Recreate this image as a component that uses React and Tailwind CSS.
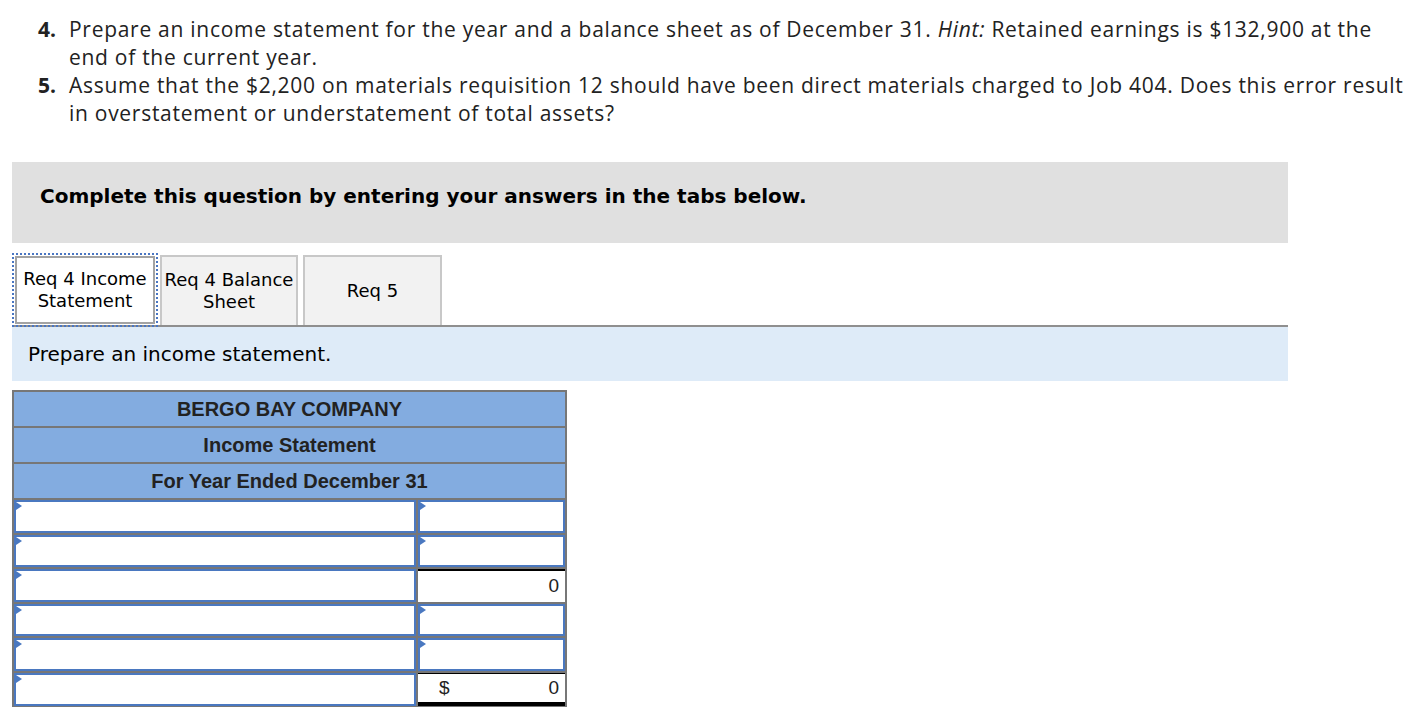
import React from 'react';

function Marker() {
    return (
        <span className="absolute left-0 top-0 w-0 h-0 border-t-[4px] border-b-[4px] border-l-[6px] border-t-transparent border-b-transparent border-l-[#4a78c0]" />
    );
}

function InputCell() {
    return (
        <div className="relative bg-white border-2 border-[#4a78c0]">
            <Marker />
        </div>
    );
}

function ValueCell({ value, dollar, total }) {
    return (
        <div
            className={
                'flex items-center justify-between bg-white px-[6px] text-[19px] text-[#222] ' +
                (total ? 'border-t border-black border-b-[4px]' : 'border-t-2 border-black')
            }
        >
            <span className="pl-[15px]">{dollar ? '$' : ''}</span>
            <span>{value}</span>
        </div>
    );
}

export default function App() {
    const rows = [
        { type: 'input' },
        { type: 'input' },
        { type: 'value', value: '0' },
        { type: 'input' },
        { type: 'input' },
        { type: 'value', value: '0', dollar: true, total: true },
    ];

    return (
        <div className="min-h-screen bg-white text-black">
            <ol className="pt-[15px] pl-[38px] pr-[8px] text-[21px] tracking-[0.72px] leading-[28px] text-[#222] font-['Open_Sans',sans-serif]">
                <li className="flex">
                    <span className="w-[31px] shrink-0 font-bold tracking-normal">4.</span>
                    <p>
                        Prepare an income statement for the year and a balance sheet as of December 31. <i>Hint:</i> Retained earnings is $132,900 at the end of the current year.
                    </p>
                </li>
                <li className="flex">
                    <span className="w-[31px] shrink-0 font-bold tracking-normal">5.</span>
                    <p>
                        Assume that the $2,200 on materials requisition 12 should have been direct materials charged to Job 404. Does this error result in overstatement or understatement of total assets?
                    </p>
                </li>
            </ol>

            <div className="mx-[12px] w-[1276px] font-['DejaVu_Sans',Verdana,sans-serif]">
                <div className="mt-[35px] h-[81px] bg-[#e0e0e0] flex items-center pl-[28px] pb-[13px]">
                    <span className="text-[20px] font-bold text-black">
                        Complete this question by entering your answers in the tabs below.
                    </span>
                </div>

                <div className="mt-[10px] flex items-end border-b-2 border-[#8f8f8f]">
                    <div className="relative z-10 -mb-[2px] border-2 border-dotted border-[#4a76c2] p-px">
                        <div className="w-[140px] h-[68px] border-2 border-[#a3a3a3] bg-white flex items-center justify-center text-center text-[18px] leading-[22px] whitespace-nowrap">
                            Req 4 Income<br />Statement
                        </div>
                    </div>
                    <div className="ml-[2px] w-[138px] h-[70px] border-2 border-b-0 border-[#c8c8c8] bg-[#f2f2f2] flex items-center justify-center text-center text-[18px] leading-[22px] whitespace-nowrap">
                        Req 4 Balance<br />Sheet
                    </div>
                    <div className="ml-[5px] w-[139px] h-[70px] border-2 border-b-0 border-[#c8c8c8] bg-[#f2f2f2] flex items-center justify-center text-center text-[18px] leading-[22px]">
                        Req 5
                    </div>
                </div>

                <div className="h-[54px] bg-[#deebf8] flex items-center pl-[16px] text-[20px]">
                    Prepare an income statement.
                </div>

                <div className="mt-[9px] w-[555px] border-2 border-[#777] bg-[#777] flex flex-col gap-[2px] font-['Liberation_Sans',Arial,sans-serif]">
                    {['BERGO BAY COMPANY', 'Income Statement', 'For Year Ended December 31'].map((t) => (
                        <div key={t} className="h-[34px] bg-[#83ace0] flex items-center justify-center text-[20px] font-bold text-[#222]">
                            {t}
                        </div>
                    ))}
                    {rows.map((r, i) => (
                        <div key={i} className="grid grid-cols-[402px_1fr] gap-[2px] h-[32.5px]">
                            <InputCell />
                            {r.type === 'input' ? (
                                <InputCell />
                            ) : (
                                <ValueCell value={r.value} dollar={r.dollar} total={r.total} />
                            )}
                        </div>
                    ))}
                </div>
            </div>
        </div>
    );
}
